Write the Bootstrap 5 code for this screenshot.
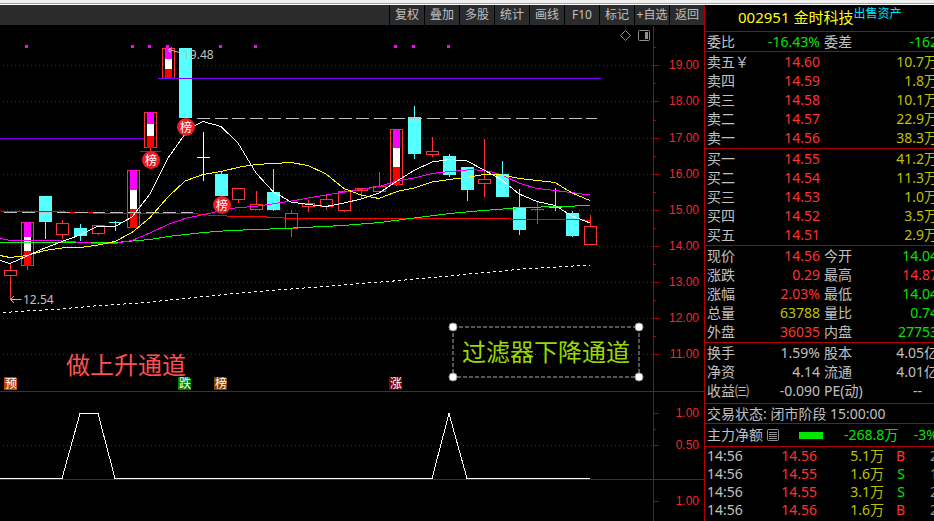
<!DOCTYPE html>
<html lang="zh-CN">
<head>
<meta charset="utf-8">
<meta name="viewport" content="width=device-width, initial-scale=1">
<title>002951 金时科技</title>
<link href="https://cdn.jsdelivr.net/npm/bootstrap@5.3.0/dist/css/bootstrap.min.css" rel="stylesheet">
<style>
:root { --line:#b00000; --up:#ff3232; --down:#00e600; --vol:#c0c000; --txt:#c0c0c0; }
body { background:#000; color:var(--txt); font-family:"Noto Sans","Noto Sans CJK SC",sans-serif; font-size:14px; line-height:19px; }
.window-edge { height:5px; background:#f0f0f0; border-bottom:1px solid #fff; box-shadow:inset 0 -1px 0 #a0a0a0; }
.toolbar { height:20px; gap:1px; background:#000; }
.toolbar-fill { background:#2a2b2d; }
.tool { width:34px; height:20px; line-height:20px; padding:0; border:0; border-radius:0; font-size:12px; color:var(--txt); background:#2a2b2d; white-space:nowrap; }
.chart { font-size:12px; }
.chart .axis { font-family:"Liberation Sans",sans-serif; fill:#f02828; text-anchor:end; }
.crisp { shape-rendering:crispEdges; }
.quote { flex:0 0 230px; border-left:1px solid var(--line); }
.block { border-bottom:1px solid var(--line); padding-left:2px; margin-right:-4px; white-space:nowrap; }
.stock { height:27px; padding-left:33px; line-height:25px; font-size:15px; color:#ff0; }
.stock a { font-size:12px; line-height:17px; color:#00e5ff; }
.quote table { width:100%; table-layout:fixed; border-collapse:collapse; }
.quote th, .quote td { padding:0; font-weight:400; text-align:right; height:19px; }
.quote th { text-align:left; }
.c-label { width:48px; } .c-value { width:65px; } .c-gap { width:4px; }
.c-time { width:48px; } .c-price { width:62px; } .c-amount { width:67px; } .c-side { width:21px; }
.bid-row { padding-bottom:1px; }
.ratio-row { height:20px; }
.funds { padding-bottom:3px; }
.flow { height:23px; line-height:22px; }
.flow-bar { width:24px; height:7px; background:var(--down); margin:0 21px 0 20px; }
.trades { border-bottom:0; }
.trades td { height:18px; line-height:18px; }
.up { color:var(--up); } .down { color:var(--down); } .vol { color:var(--vol); } .dim { color:#909090; }
</style>
<script src="https://cdn.jsdelivr.net/npm/bootstrap@5.3.0/dist/js/bootstrap.bundle.min.js"></script>
</head>
<body>
<div class="window-edge"></div>
<main class="d-flex overflow-hidden">
  <section class="flex-grow-1">
    <nav class="toolbar d-flex" aria-label="图表工具">
      <div class="toolbar-fill flex-grow-1"></div>
      <button class="tool" type="button">复权</button>
      <button class="tool" type="button">叠加</button>
      <button class="tool" type="button">多股</button>
      <button class="tool" type="button">统计</button>
      <button class="tool" type="button">画线</button>
      <button class="tool" type="button">F10</button>
      <button class="tool" type="button">标记</button>
      <button class="tool overflow-hidden" type="button">+自选</button>
      <button class="tool" type="button">返回</button>
    </nav>
    <svg class="chart d-block w-100" viewBox="0 25 704 496" role="img" aria-label="K线图">
      <g class="crisp" stroke="#b00000" fill="none">
        <path stroke-dasharray="1 3" d="M3 65.5H653M3 101.5H653M3 138.5H653M3 174.5H653M3 210.5H653M3 246.5H653M3 282.5H653M3 318.5H653M3 354.5H653M3 445.5H653"/>
        <path d="M0 391.5H704M0 479.5H704M653.5 26V521"/>
        <path d="M653 65.5h6M653 101.5h6M653 138.5h6M653 174.5h6M653 210.5h6M653 246.5h6M653 282.5h6M653 318.5h6M653 354.5h6M653 413.5h6M653 445.5h6M653 501.5h6"/>
        <path d="M653 47.5h3M653 83.5h3M653 120.5h3M653 156.5h3M653 192.5h3M653 228.5h3M653 264.5h3M653 300.5h3M653 336.5h3M653 429.5h3"/>
      </g>
      <g class="axis">
        <text x="699" y="69">19.00</text><text x="699" y="105">18.00</text><text x="699" y="142">17.00</text>
        <text x="699" y="178">16.00</text><text x="699" y="214">15.00</text><text x="699" y="250">14.00</text>
        <text x="699" y="286">13.00</text><text x="699" y="322">12.00</text><text x="699" y="358">11.00</text>
        <text x="699" y="417">1.00</text><text x="699" y="449">0.50</text><text x="699" y="505">1.00</text>
      </g>
      <g id="candles" class="crisp"></g>
      <g class="crisp" fill="#f0f"><path d="M25 45h3v3h-3zM131 45h3v3h-3zM148 45h3v3h-3zM166 45h3v3h-3zM219 45h3v3h-3zM254 45h3v3h-3zM394 45h3v3h-3zM412 45h3v3h-3zM447 45h3v3h-3z"/></g>
      <g class="crisp" fill="none">
        <path stroke="#8000ff" d="M0 138.5H144M158 78.5H601M140 151.5H161"/>
        <polyline stroke="#f00" points="0,210.5 2,211.5 52,211.5 107,213.5 193,213.5 213,215.5 240,216.5 265,216.5 268,217.5 300,218.5 510,218.5 512,219.5 580,219.5 590,220.5"/>
        <path stroke="#c0c0c0" stroke-dasharray="13 4.7" d="M4 212.5H193M197 118.5H597"/>
        <polyline stroke="#0f0" points="0,242.5 115,242.5 132,241 150,239.5 168,236.5 203,232.5 230,230.5 283,228.5 343,225.5 380,222.5 410,218.5 450,213.5 483,210.5 523,207.5 560,206.5 590,205.5"/>
        <polyline stroke="#f0f" points="0,238.5 10,240.5 62,241 98,243.5 115,243.5 132,240.5 150,233 168,224.5 185,218.5 213,212.5 230,208.5 258,206 275,203.5 291,201 326,195 357,190 379,186.5 397,181 414,178 432,173.5 450,171.5 473,169.5 490,171.5 502,175 520,183.5 537,188.5 555,190.5 590,195"/>
        <polyline stroke="#ff0" points="0,255.5 10,257.5 27,255.5 45,250.5 62,248 80,247.5 98,245 115,241.5 132,232.5 150,217.5 168,197 185,181 203,174.5 221,171.5 240,167 256,164.5 273,163.5 291,162.5 308,165.5 326,174 344,188.5 361,195 379,198.5 397,191.5 414,188 432,182 449,179.5 467,177.5 484,174.5 502,175 519,178.5 537,180.5 555,182.5 572,193 590,200.5"/>
        <polyline stroke="#fff" points="0,260.5 10,263.5 27,256 40,250 62,241.5 80,235 97,226.5 115,226.5 132,217 150,194 168,158 185,134 192,127 203,121.5 221,126.5 238,143 256,173 273,191.5 291,202 308,204.5 326,206.5 344,203 361,199 379,193 397,181 414,170.5 432,162 449,159.5 467,161 484,170 502,180 519,194 537,201.5 555,205.5 572,216 590,223"/>
        <polyline stroke="#fff" stroke-dasharray="3 3" points="3,312.5 60,309 100,305.5 140,303 240,293 400,280.5 523,269 590,265"/>
        <polyline stroke="#fff" points="0,478.5 62,478.5 80,413.5 98,413.5 115,478.5 432,478.5 449,413.5 467,478.5 590,478.5"/>
      </g>
      <g fill="#ed1c24"><circle cx="151" cy="160" r="9"/><circle cx="186" cy="127" r="9"/><circle cx="222" cy="205" r="9"/></g>
      <g fill="#fff" font-size="12" text-anchor="middle"><text x="151" y="165">榜</text><text x="186" y="132">榜</text><text x="222" y="210">榜</text></g>
      <path class="crisp" fill="#c04000" d="M4 377h11l2 2v11H4z"/><path class="crisp" fill="#008000" d="M178 377h11l2 2v11h-13z"/>
      <path class="crisp" fill="#804000" d="M214 377h11l2 2v11h-13z"/><path class="crisp" fill="#800000" d="M389 377h11l2 2v11h-13z"/>
      <g fill="#fff" font-size="12" text-anchor="middle"><text x="11" y="388">预</text><text x="185" y="388">跌</text><text x="221" y="388">榜</text><text x="396" y="388">涨</text></g>
      <g fill="none" stroke="#c0c0c0"><path d="M168.5 49.5l11 3M172 47.500l-3.500 2 2 3.500M10.500 299.500h11M14 296l-3.500 3.500 3.500 3.500"/></g>
      <g fill="#c0c0c0"><text x="183" y="59">19.48</text><text x="23" y="304">12.54</text></g>
      <text x="66" y="374" font-size="24" fill="#ff5050">做上升通道</text>
      <text x="462" y="361" font-size="24" fill="#99d900">过滤器下降通道</text>
      <rect class="crisp" x="453" y="327" width="186" height="50" fill="none" stroke="#555" stroke-width="2" stroke-dasharray="4 2"/>
      <g fill="#fff" stroke="#999"><circle cx="453" cy="327" r="4"/><circle cx="639" cy="327" r="4"/><circle cx="453" cy="377" r="4"/><circle cx="639" cy="377" r="4"/></g>
      <g fill="none" stroke="#909090"><path d="M625.500 30.500l5 5-5 5-5-5z"/><rect x="638.500" y="30.500" width="11" height="10" rx="1"/><path fill="#909090" stroke="none" d="M645 32h3v7h-3z"/></g>
    </svg>
  </section>

  <aside class="quote overflow-hidden">
    <div class="block stock d-flex align-items-start"><span>002951 金时科技</span><a class="text-decoration-none" href="#">出售资产</a></div>
    <div class="block ratio-row">
      <table><colgroup><col class="c-label"><col class="c-value"><col class="c-gap"><col class="c-label"><col></colgroup>
        <tr><th scope="row">委比</th><td class="down">-16.43%</td><td></td><th scope="row">委差</th><td class="down">-162</td></tr>
      </table>
    </div>
    <div class="block bid-row">
      <table><colgroup><col class="c-label"><col class="c-value"><col></colgroup>
        <tr><th scope="row">卖五￥</th><td class="up">14.60</td><td class="vol">10.7万</td></tr>
        <tr><th scope="row">卖四</th><td class="up">14.59</td><td class="vol">1.8万</td></tr>
        <tr><th scope="row">卖三</th><td class="up">14.58</td><td class="vol">10.1万</td></tr>
        <tr><th scope="row">卖二</th><td class="up">14.57</td><td class="vol">22.9万</td></tr>
        <tr><th scope="row">卖一</th><td class="up">14.56</td><td class="vol">38.3万</td></tr>
      </table>
    </div>
    <div class="block bid-row">
      <table><colgroup><col class="c-label"><col class="c-value"><col></colgroup>
        <tr><th scope="row">买一</th><td class="up">14.55</td><td class="vol">41.2万</td></tr>
        <tr><th scope="row">买二</th><td class="up">14.54</td><td class="vol">11.3万</td></tr>
        <tr><th scope="row">买三</th><td class="up">14.53</td><td class="vol">1.0万</td></tr>
        <tr><th scope="row">买四</th><td class="up">14.52</td><td class="vol">3.5万</td></tr>
        <tr><th scope="row">买五</th><td class="up">14.51</td><td class="vol">2.9万</td></tr>
      </table>
    </div>
    <div class="block bid-row">
      <table><colgroup><col class="c-label"><col class="c-value"><col class="c-gap"><col class="c-label"><col></colgroup>
        <tr><th scope="row">现价</th><td class="up">14.56</td><td></td><th scope="row">今开</th><td class="down">14.04</td></tr>
        <tr><th scope="row">涨跌</th><td class="up">0.29</td><td></td><th scope="row">最高</th><td class="up">14.87</td></tr>
        <tr><th scope="row">涨幅</th><td class="up">2.03%</td><td></td><th scope="row">最低</th><td class="down">14.04</td></tr>
        <tr><th scope="row">总量</th><td class="vol">63788</td><td></td><th scope="row">量比</th><td class="down">0.74</td></tr>
        <tr><th scope="row">外盘</th><td class="up">36035</td><td></td><th scope="row">内盘</th><td class="down">27753</td></tr>
      </table>
    </div>
    <div class="block funds">
      <table><colgroup><col class="c-label"><col class="c-value"><col class="c-gap"><col class="c-label"><col></colgroup>
        <tr><th scope="row">换手</th><td>1.59%</td><td></td><th scope="row">股本</th><td>4.05亿</td></tr>
        <tr><th scope="row">净资</th><td>4.14</td><td></td><th scope="row">流通</th><td>4.01亿</td></tr>
        <tr><th scope="row">收益㈢</th><td>-0.090</td><td></td><th scope="row">PE(动)</th><td class="pe-3">--</td></tr>
      </table>
    </div>
    <div class="block ratio-row">交易状态: 闭市阶段 15:00:00</div>
    <div class="block flow d-flex align-items-center">
      <span>主力净额</span>
      <svg class="ms-1" width="12" height="12" viewBox="0 0 12 12" fill="none" stroke="#909090" aria-hidden="true"><rect x=".5" y=".5" width="11" height="11" rx="1"/><path d="M2 3.500h8M2 5.500h8M2 7.500h8M2 9.500h8"/></svg>
      <span class="flow-bar"></span>
      <span class="down">-268.8万</span>
      <span class="down ms-auto">-3%</span>
    </div>
    <div class="block trades">
      <table><colgroup><col class="c-time"><col class="c-price"><col class="c-amount"><col class="c-side"><col></colgroup>
        <tr><td class="text-start">14:56</td><td class="up">14.56</td><td class="vol">5.1万</td><td class="up">B</td><td class="dim">2</td></tr>
        <tr><td class="text-start">14:56</td><td class="up">14.55</td><td class="vol">1.6万</td><td class="down">S</td><td class="dim">1</td></tr>
        <tr><td class="text-start">14:56</td><td class="up">14.55</td><td class="vol">3.1万</td><td class="down">S</td><td class="dim">2</td></tr>
        <tr><td class="text-start">14:56</td><td class="up">14.56</td><td class="vol">1.6万</td><td class="up">B</td><td class="dim">2</td></tr>
      </table>
    </div>
  </aside>
</main>
<script>
// [kind, left, bodyTop, bodyBottom, wickTop, wickBottom, whiteFrom, redFrom]
// kind: u = hollow rising, d = filled falling, s = striped limit-up, w = white cross
const days = [
  ['u',4,270,276,264,299],['s',21,222,266,222,270,237,251],['d',39,196,222,196,239],['u',56,223,235,220,239],
  ['d',74,228,236,224,241],['u',92,225,234,225,235],['d',109,222,223,221,231],['s',127,170,228,170,228,190,209],
  ['s',144,112,148,112,151,124,136],['s',162,48,79,48,79,59,69],['d',179,48,118,48,118],['w',197,157,158,132,181],
  ['d',215,174,196,171,196],['u',232,188,200,188,203],['u',250,204,210,191,210],['d',267,192,210,169,211],
  ['u',285,213,229,210,237],['u',302,203,207,200,212],['u',320,199,207,194,210],['u',338,191,211,190,212],
  ['u',355,188,191,188,198],['u',373,186,192,172,193],['s',390,129,185,129,186,148,167],['d',408,117,154,106,159],
  ['u',426,151,155,137,157],['d',443,156,175,154,177],['d',461,167,190,167,201],['u',478,179,184,139,197],
  ['d',496,174,197,161,197],['d',513,207,230,189,235],['u',531,209,210,202,224],['d',549,207,208,188,211],
  ['d',566,213,236,211,237],['u',584,226,245,215,245]
];
const bar = (x, y, w, h, fill) => h > 0 ? `<rect x="${x}" y="${y}" width="${w}" height="${h}" fill="${fill}"/>` : '';
document.getElementById('candles').innerHTML = days.map(([kind, x, top, bottom, high, low, white, red]) => {
  const color = { u: '#ff3232', s: '#ff3232', d: '#54ffff', w: '#fff' }[kind];
  let out = bar(x + 6, high, 1, top - high, color) + bar(x + 6, bottom, 1, low - bottom, color);
  if (kind === 'd' || kind === 'w' || bottom - top < 2) return out + bar(x, top, 13, bottom - top, color);
  out += `<rect x="${x + .5}" y="${top + .5}" width="12" height="${bottom - top - 1}" fill="none" stroke="${color}"/>`;
  if (kind === 's') out += bar(x + 3, top, 7, white - top, '#f0f') + bar(x + 3, white, 7, red - white, '#fff') + bar(x + 3, red, 7, bottom - red, '#f00');
  return out;
}).join('');
</script>
</body>
</html>
